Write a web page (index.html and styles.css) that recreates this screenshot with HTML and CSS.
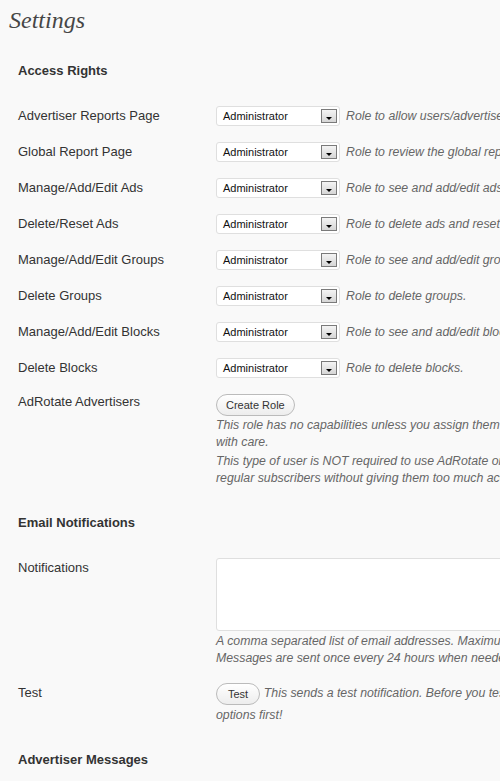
FILE: index.html
```html
<!DOCTYPE html>
<html>
<head>
<meta charset="utf-8">
<link rel="stylesheet" href="styles.css">
</head>
<body>
<div class="wrap">
  <h2 class="page-title">Settings</h2>

  <h3 class="section-title access">Access Rights</h3>

  <div class="row role">
    <div class="label">Advertiser Reports Page</div>
    <div class="field inline">
      <div class="select"><span>Administrator</span><i class="arrow"></i></div>
      <span class="desc">Role to allow users/advertisers to see their advertisement reports.</span>
    </div>
  </div>
  <div class="row role">
    <div class="label">Global Report Page</div>
    <div class="field inline">
      <div class="select"><span>Administrator</span><i class="arrow"></i></div>
      <span class="desc">Role to review the global report.</span>
    </div>
  </div>
  <div class="row role">
    <div class="label">Manage/Add/Edit Ads</div>
    <div class="field inline">
      <div class="select"><span>Administrator</span><i class="arrow"></i></div>
      <span class="desc">Role to see and add/edit ads.</span>
    </div>
  </div>
  <div class="row role">
    <div class="label">Delete/Reset Ads</div>
    <div class="field inline">
      <div class="select"><span>Administrator</span><i class="arrow"></i></div>
      <span class="desc">Role to delete ads and reset stats.</span>
    </div>
  </div>
  <div class="row role">
    <div class="label">Manage/Add/Edit Groups</div>
    <div class="field inline">
      <div class="select"><span>Administrator</span><i class="arrow"></i></div>
      <span class="desc">Role to see and add/edit groups.</span>
    </div>
  </div>
  <div class="row role">
    <div class="label">Delete Groups</div>
    <div class="field inline">
      <div class="select"><span>Administrator</span><i class="arrow"></i></div>
      <span class="desc">Role to delete groups.</span>
    </div>
  </div>
  <div class="row role">
    <div class="label">Manage/Add/Edit Blocks</div>
    <div class="field inline">
      <div class="select"><span>Administrator</span><i class="arrow"></i></div>
      <span class="desc">Role to see and add/edit blocks.</span>
    </div>
  </div>
  <div class="row role">
    <div class="label">Delete Blocks</div>
    <div class="field inline">
      <div class="select"><span>Administrator</span><i class="arrow"></i></div>
      <span class="desc">Role to delete blocks.</span>
    </div>
  </div>
  <div class="row">
    <div class="label">AdRotate Advertisers</div>
    <div class="field">
      <span class="button btn-role">Create Role</span>
      <p class="desc block">This role has no capabilities unless you assign them using the above options. Obviously you should use this<br>with care.</p>
      <p class="desc block second">This type of user is NOT required to use AdRotate or any of it's features. It merely helps you keep advertisers apart from<br>regular subscribers without giving them too much access.</p>
    </div>
  </div>

  <h3 class="section-title email">Email Notifications</h3>

  <div class="row notif">
    <div class="label">Notifications</div>
    <div class="field">
      <div class="textarea"></div>
      <p class="desc block">A comma separated list of email addresses. Maximum of 5 addresses. Keep this field empty to disable notifications.<br>Messages are sent once every 24 hours when needed. If nothing happens, no messages are sent.</p>
    </div>
  </div>
  <div class="row test">
    <div class="label">Test</div>
    <div class="field test-field">
      <span class="button btn-test">Test</span> <span class="desc">This sends a test notification. Before you test, for example, with a new email address. Save the<br>options first!</span>
    </div>
  </div>

  <h3 class="section-title msgs">Advertiser Messages</h3>
</div>
</body>
</html>
```
FILE: styles.css
```css
html, body {
  margin: 0;
  padding: 0;
  overflow: hidden;
  background: #f9f9f9;
}
body {
  font-family: "Liberation Sans", Arial, sans-serif;
  font-size: 13px;
  color: #333;
}
.wrap {
  width: 1000px;
}
.page-title {
  margin: 0;
  padding-left: 9px;
  height: 40px;
  line-height: 40px;
  font-family: "Liberation Serif", "Times New Roman", serif;
  font-style: italic;
  font-weight: normal;
  font-size: 24px;
  color: #464646;
}
.section-title {
  margin: 20px 0 18px;
  padding-left: 18px;
  height: 20px;
  line-height: 20px;
  font-size: 13px;
  font-weight: bold;
  color: #333;
}
.section-title.access {
  margin-top: 21px;
  margin-bottom: 17px;
}
.section-title.email {
  margin-top: 18px;
  margin-bottom: 19px;
}
.section-title.msgs {
  margin-top: 17px;
}
.row {
  display: grid;
  grid-template-columns: 216px 1fr;
}
.label {
  padding: 8px 0 0 18px;
  line-height: 15px;
}
.row.role .label {
  padding-top: 10px;
}
.field {
  padding: 8px 0;
}
.field.inline {
  display: flex;
  align-items: center;
  gap: 6px;
  height: 20px;
}
.select {
  box-sizing: border-box;
  width: 124px;
  height: 20px;
  border: 1px solid #dfdfdf;
  border-radius: 3px;
  background: #fff;
  display: flex;
  align-items: center;
  justify-content: space-between;
  padding: 0 2px 0 6px;
  font-size: 11px;
  color: #111;
}
.arrow {
  box-sizing: border-box;
  width: 16px;
  height: 14px;
  border: 1px solid #7a7a7a;
  background: linear-gradient(#f4f4f4, #d6d6d6);
  position: relative;
}
.arrow::after {
  content: "";
  position: absolute;
  left: 4px;
  bottom: 2px;
  border-left: 3px solid transparent;
  border-right: 3px solid transparent;
  border-top: 3px solid #000;
}
.desc {
  font-style: italic;
  color: #666;
  font-size: 12.3px;
  white-space: nowrap;
}
.desc.block {
  margin: 0;
  line-height: 17px;
}
.btn-role + .desc.block {
  margin-top: 1px;
}
.desc.block.second {
  margin-top: 2px;
}
.button {
  display: inline-block;
  box-sizing: border-box;
  height: 22px;
  line-height: 20px;
  padding: 0 9px;
  border: 1px solid #bbb;
  border-radius: 11px;
  background: linear-gradient(#fff, #ededed);
  font-size: 11px;
  color: #333;
  vertical-align: middle;
}
.button.btn-test {
  padding: 0 11px;
}
.row.notif .field {
  padding-top: 6px;
}
.textarea {
  box-sizing: border-box;
  width: 600px;
  height: 73px;
  border: 1px solid #dfdfdf;
  border-radius: 3px;
  background: #fff;
  margin-bottom: 2px;
}
.row.test {
  margin-top: 2px;
}
.test-field {
  line-height: 20px;
  padding-top: 6px;
}
```
